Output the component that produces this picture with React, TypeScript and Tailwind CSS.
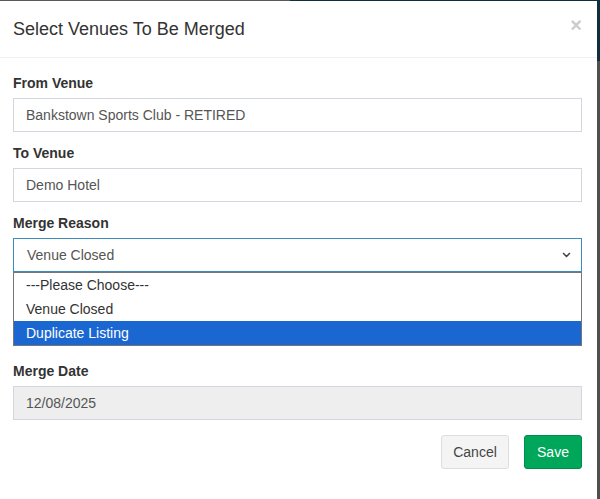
import React from "react";

const inputCls =
  "h-[34px] w-full border border-[#d2d6de] px-[12px] flex items-center text-[14px] text-[#555]";

function Field({ label, value, disabled }: { label: string; value: string; disabled?: boolean }) {
  return (
    <div className="mb-[11px]">
      <div className="h-[20px] mb-[5px] text-[14px] leading-[20px] font-bold text-[#333]">{label}</div>
      <div className={`${inputCls} ${disabled ? "bg-[#eee]" : "bg-white"}`}>{value}</div>
    </div>
  );
}

export default function App() {
  const options = ["---Please Choose---", "Venue Closed", "Duplicate Listing"];
  return (
    <div className="w-[600px] h-[499px] bg-white overflow-hidden flex flex-col font-['Liberation_Sans',Arial,sans-serif]">
      <div className="flex h-[1px] shrink-0">
        <div className="w-[290px] bg-[#5a5a5a]" />
        <div className="flex-1 bg-[#0f2f3d]" />
      </div>
      <div className="flex flex-1">
        <div className="flex-1 flex flex-col">
          {/* header */}
          <div className="h-[57px] border-b border-[#f0f0f0] flex items-center justify-between pl-[13px] pr-[15px]">
            <h4 className="text-[18px] text-[#333] leading-none">Select Venues To Be Merged</h4>
            <span className="text-[#ccc] text-[20px] font-bold leading-none -mt-[8px]">×</span>
          </div>
          {/* body */}
          <div className="px-[13px] pt-[15px] pr-[15px]">
            <Field label="From Venue" value="Bankstown Sports Club - RETIRED" />
            <Field label="To Venue" value="Demo Hotel" />
            <div className="mb-[89px] relative">
              <div className="h-[20px] mb-[5px] text-[14px] leading-[20px] font-bold text-[#333]">Merge Reason</div>
              <div className="h-[34px] w-full border border-[#3c8dbc] px-[13px] flex items-center justify-between text-[14px] text-[#555] bg-white">
                <span>Venue Closed</span>
                <svg width="9" height="6" viewBox="0 0 10 7" className="mr-[-3px]">
                  <path d="M1 1.2 L5 5.2 L9 1.2" fill="none" stroke="#444" strokeWidth="1.8" />
                </svg>
              </div>
              <div className="absolute left-0 right-0 top-[59px] border border-[#767676] bg-white z-10">
                {options.map((o, i) => (
                  <div
                    key={o}
                    className={`h-[24px] flex items-center px-[12px] text-[14px] ${
                      i === 2 ? "bg-[#1a67d2] text-white" : "text-[#333]"
                    }`}
                  >
                    {o}
                  </div>
                ))}
              </div>
            </div>
            <Field label="Merge Date" value="12/08/2025" disabled />
          </div>
          {/* footer */}
          <div className="flex justify-end gap-[15px] pr-[15px] pt-[4px]">
            <button className="h-[34px] w-[68px] rounded-[3px] border border-[#ddd] bg-[#f4f4f4] text-[14px] text-[#444]">
              Cancel
            </button>
            <button className="h-[34px] w-[58px] rounded-[3px] border border-[#008d4c] bg-[#00a65a] text-[14px] text-white">
              Save
            </button>
          </div>
        </div>
        <div className="w-[3px] flex flex-col">
          <div className="h-[60px] bg-[#0f2f3d]" />
          <div className="flex-1 bg-[#4f4f4f]" />
        </div>
      </div>
    </div>
  );
}
